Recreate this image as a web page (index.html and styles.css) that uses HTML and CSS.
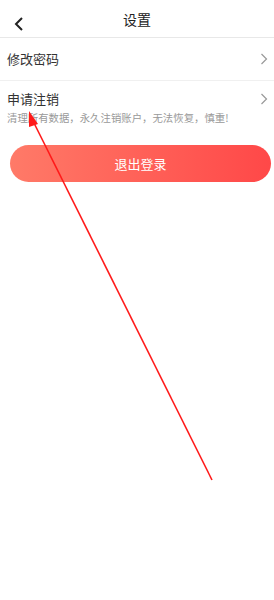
FILE: index.html
```html
<!DOCTYPE html>
<html lang="zh-CN">
<head>
<meta charset="UTF-8" />
<meta name="viewport" content="width=device-width, initial-scale=1" />
<title>设置</title>
<link rel="stylesheet" href="styles.css">
</head>
<body>

<header class="topbar">
  <span class="back">
    <svg width="10" height="14" viewBox="0 0 10 14"><path d="M8 1 L2 7 L8 13" fill="none" stroke="#222" stroke-width="2"/></svg>
  </span>
  <h1>设置</h1>
</header>

<ul class="menu">
  <li class="item">
    <div class="label">修改密码</div>
    <svg class="arrow" width="8" height="12" viewBox="0 0 8 12"><path d="M1.5 1 L6.5 6 L1.5 11" fill="none" stroke="#999" stroke-width="1.2"/></svg>
  </li>
  <li class="item item-tall">
    <div>
      <div class="label">申请注销</div>
      <div class="hint">清理所有数据，永久注销账户，无法恢复，慎重!</div>
    </div>
    <svg class="arrow" width="8" height="12" viewBox="0 0 8 12"><path d="M1.5 1 L6.5 6 L1.5 11" fill="none" stroke="#999" stroke-width="1.2"/></svg>
  </li>
</ul>

<button class="logout">退出登录</button>

<!-- 标注箭头 -->
<svg class="mark" width="274" height="600" viewBox="0 0 274 600">
  <line x1="212" y1="480" x2="33" y2="121" stroke="#ff1a1a" stroke-width="1.6"/>
  <polygon points="29,111 38,124 29,127" fill="#ff1a1a"/>
</svg>

</body>
</html>
```

FILE: styles.css
```css
body {
  margin: 0;
  font-family: "Noto Sans CJK SC", "Noto Sans", sans-serif;
  background: #fff;
  color: #333;
  position: relative;
  min-height: 600px;
}
.topbar {
  height: 37px;
  border-bottom: 1px solid #e8e8e8;
  display: flex;
  align-items: center;
  justify-content: center;
  position: relative;
}
.topbar h1 {
  margin: 0;
  font-size: 14px;
  font-weight: normal;
  color: #222;
}
.back {
  position: absolute;
  left: 14px;
  top: 12px;
}
.menu {
  list-style: none;
  margin: 0;
  padding: 0;
}
.item {
  display: flex;
  align-items: center;
  justify-content: space-between;
  height: 42px;
  padding: 0 6px 0 7px;
  border-bottom: 1px solid #f0f0f0;
}
.item-tall {
  height: auto;
  align-items: flex-start;
  padding-top: 9px;
  padding-bottom: 6px;
  border-bottom: none;
}
.item-tall .arrow {
  margin-top: 3px;
}
.label {
  font-size: 13px;
  line-height: 18px;
  color: #333;
}
.hint {
  font-size: 10.4px;
  line-height: 15px;
  margin-top: 2px;
  color: #999;
}
.logout {
  display: block;
  margin: 14px 3px 0 10px;
  width: 261px;
  height: 37px;
  border: none;
  border-radius: 19px;
  background: linear-gradient(90deg, #ff7a68, #ff4848);
  color: #fff;
  font-family: inherit;
  font-size: 13px;
}
.mark {
  position: absolute;
  left: 0;
  top: 0;
  pointer-events: none;
}
```
